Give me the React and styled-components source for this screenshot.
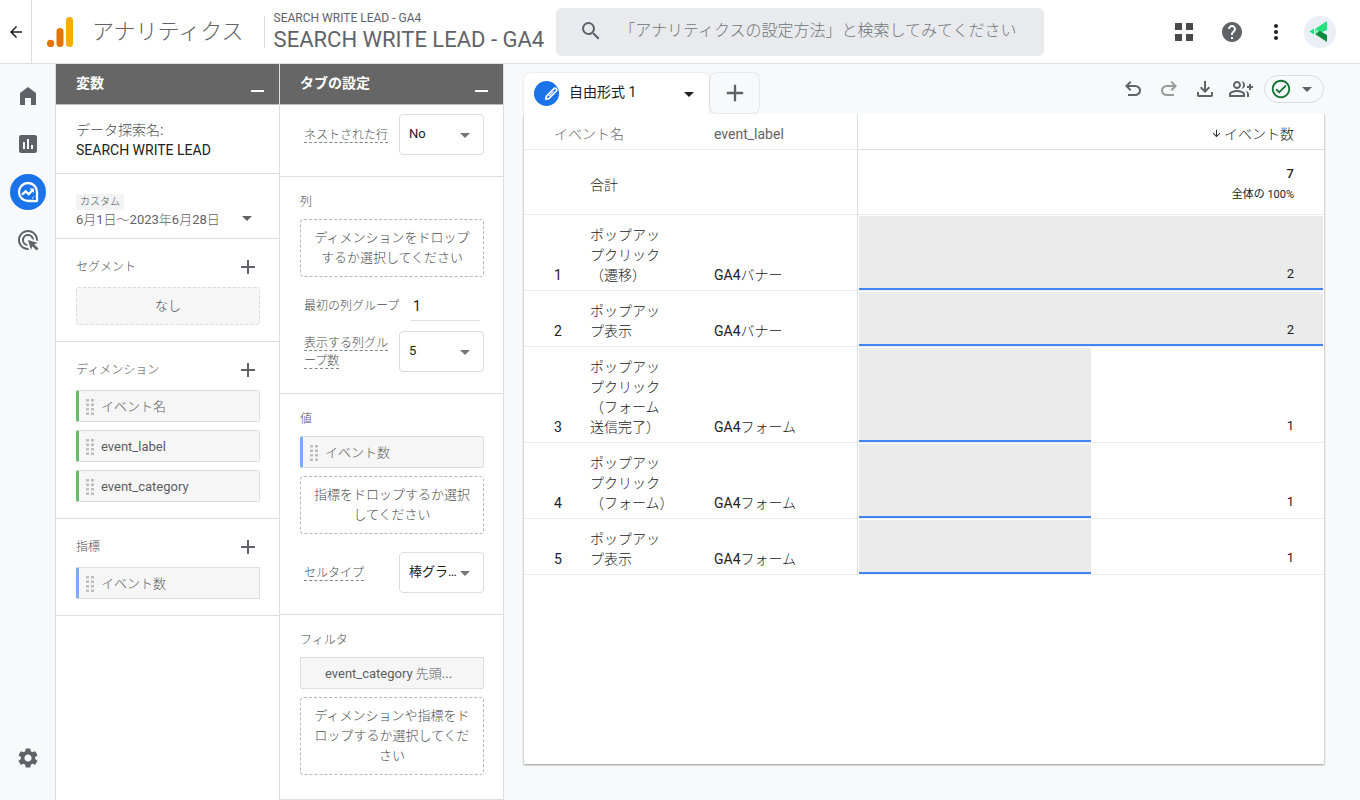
import React, { useState } from "react";
import styled, { createGlobalStyle } from "styled-components";
import {
    MdAdd,
    MdAdsClick,
    MdArrowBack,
    MdArrowDownward,
    MdArrowDropDown,
    MdAssessment,
    MdHelp,
    MdMoreVert,
    MdOutlineCheckCircle,
    MdOutlineGroupAdd,
    MdSearch,
    MdSettings,
} from "react-icons/md";

const GlobalStyle = createGlobalStyle`
    *, *::before, *::after {
        box-sizing: border-box;
    }

    body {
        margin: 0;
        background: #f8f9fb;
        color: #202124;
        font-family: Roboto, "Noto Sans CJK JP Light", "Noto Sans CJK JP", sans-serif;
        font-size: 14px;
        line-height: 20px;
    }

    button, input, select {
        font: inherit;
        color: inherit;
    }

    svg {
        display: block;
        flex: none;
    }
`;

// ===== LAYOUT =====
const Page = styled.div`
    display: flex;
    flex-direction: column;
    min-height: 100vh;
`;

const Body = styled.div`
    display: flex;
    flex: 1;
`;

const IconButton = styled.button`
    display: flex;
    align-items: center;
    justify-content: center;
    width: ${props => props.$size || 24}px;
    height: ${props => props.$size || 24}px;
    flex: none;
    padding: 0;
    border: 0;
    border-radius: 50%;
    background: ${props => props.$bg || "transparent"};
    color: ${props => props.$color || "#5f6368"};
    cursor: pointer;
`;

// ===== HEADER =====
const Header = styled.header`
    display: flex;
    align-items: center;
    height: 64px;
    padding-right: 24px;
    background: #ffffff;
    border-bottom: 1px solid #dadce0;
`;

const BackCell = styled.div`
    display: flex;
    align-items: center;
    justify-content: center;
    align-self: stretch;
    width: 32px;
    border-right: 1px solid #dadce0;
`;

const Brand = styled.a`
    display: flex;
    align-items: center;
    gap: 18px;
    margin-left: 15px;
    color: #5f6368;
    font-size: 22px;
    font-weight: 300;
    line-height: 32px;
    text-decoration: none;
    white-space: nowrap;
`;

const Property = styled.div`
    display: flex;
    align-items: center;
    margin-left: 20px;
    color: #5f6368;
    white-space: nowrap;

    &::before {
        content: "";
        width: 1px;
        height: 32px;
        margin-right: 9px;
        background: #dadce0;
    }
`;

const AccountName = styled.div`
    font-size: 12px;
    line-height: 16px;
`;

const PropertyName = styled.div`
    font-size: 22px;
    line-height: 28px;
`;

const SearchBox = styled.label`
    display: flex;
    align-items: center;
    flex: 0 1 488px;
    gap: 16px;
    height: 48px;
    margin-left: 12px;
    padding: 0 12px 2px 23px;
    border-radius: 6px;
    background: #e8eaed;
    color: #5f6368;
`;

const SearchInput = styled.input`
    flex: 1;
    min-width: 0;
    padding: 0;
    border: 0;
    outline: 0;
    background: transparent;
    font-size: 16px;
    font-weight: 300;

    &::placeholder {
        color: #70757a;
        opacity: 1;
    }
`;

const HeaderActions = styled.div`
    display: flex;
    align-items: center;
    gap: 20px;
    margin-left: auto;

    & > :first-child {
        margin-right: 4px;
    }

    & > :last-child {
        margin-left: -4px;
    }
`;

// ===== SIDE RAIL =====
const Rail = styled.nav`
    display: flex;
    flex-direction: column;
    align-items: center;
    gap: 12px;
    width: 56px;
    flex: none;
    padding: 14px 0 24px;
    border-right: 1px solid #dadce0;

    & > :last-child {
        margin-top: auto;
    }
`;

// ===== PANELS =====
const Panel = styled.section`
    width: 224px;
    flex: none;
    background: #ffffff;
    border-right: 1px solid #dadce0;
`;

const PanelHeader = styled.div`
    display: flex;
    justify-content: space-between;
    height: 41px;
    padding: 9px 15px 0 20px;
    border-bottom: 1px solid #bdbdbd;
    background: #666666;
    color: #ffffff;
`;

const PanelTitle = styled.h2`
    margin: 0;
    font-family: Roboto, "Noto Sans CJK JP", sans-serif;
    font-size: 14px;
    font-weight: 700;
    line-height: 20px;
`;

const CollapseButton = styled.button`
    width: 13px;
    height: 19px;
    padding: 0;
    border: 0;
    border-bottom: 2px solid #ffffff;
    background: transparent;
    cursor: pointer;
`;

const Section = styled.div`
    padding: ${props => props.$pad || "0 19px 16px 20px"};
    border-bottom: 1px solid #dadce0;
`;

const SectionHead = styled.div`
    display: flex;
    align-items: center;
    justify-content: space-between;
    height: ${props => (props.$compact ? 42 : 48)}px;
    padding-top: 8px;
`;

const SectionTitle = styled.h3`
    margin: 0;
    color: #4a4d51;
    font-size: 12px;
    font-weight: 400;
    line-height: 20px;
`;

const ExplorationLabel = styled.label`
    display: block;
    color: #4a4d51;
`;

const ExplorationInput = styled.input`
    display: block;
    width: 100%;
    height: 20px;
    padding: 0;
    border: 0;
    outline: 0;
    background: transparent;
`;

const DateButton = styled.button`
    display: flex;
    align-items: flex-end;
    justify-content: space-between;
    width: 100%;
    padding: 0 1px 0 0;
    border: 0;
    background: transparent;
    color: #5f6368;
    font-size: 13px;
    text-align: left;
    cursor: pointer;
`;

const DateTag = styled.span`
    display: block;
    width: fit-content;
    padding: 0 4px;
    background: #f1f3f4;
    color: #4a4d51;
    font-size: 10px;
    line-height: 16px;
`;

const EmptyBox = styled.button`
    display: block;
    width: 100%;
    height: 38px;
    border: 1px dashed #dadce0;
    border-radius: 2px;
    background: #f6f6f6;
    color: #4a4d51;
    font-size: 13px;
`;

const ChipList = styled.div`
    display: flex;
    flex-direction: column;
    gap: 8px;
`;

const ChipButton = styled.button`
    display: flex;
    align-items: center;
    gap: 7px;
    width: 100%;
    height: 32px;
    padding: 2px 31px 0 ${props => (props.$accent ? 7 : 24)}px;
    border: 1px solid #dadce0;
    border-left: ${props => (props.$accent ? `3px solid ${props.$accent}` : "1px solid #dadce0")};
    border-radius: 2px;
    background: #f6f6f6;
    color: #5a5d62;
    font-size: 13px;
    white-space: nowrap;
    cursor: grab;
`;

const DropZone = styled.button`
    display: block;
    width: 100%;
    padding: 8px 12px;
    border: 1px dashed #b4b7bb;
    border-radius: 4px;
    background: transparent;
    color: #4a4d51;
    font-size: 13px;
    line-height: 20px;
    text-align: center;
    line-break: anywhere;
`;

const Field = styled.div`
    display: flex;
    align-items: ${props => props.$align || "center"};
    gap: 11px;
    margin-top: ${props => props.$top || 0}px;
    padding-left: 4px;
`;

const FieldLabel = styled.label`
    width: ${props => (props.$wide ? 96 : 84)}px;
    flex: none;
    color: #4a4d51;
    font-size: 12px;
    line-height: ${props => (props.$wide ? 22 : 18)}px;
    line-break: anywhere;

    span {
        border-bottom: 1px dashed #80868b;
    }
`;

const NumberInput = styled.input`
    flex: 1;
    min-width: 0;
    height: 26px;
    margin-right: 4px;
    padding: 0 2px 4px;
    border: 0;
    border-bottom: 1px solid #dadce0;
    outline: 0;
    background: transparent;
`;

const SelectBox = styled.div`
    display: grid;
    flex: 1;
    min-width: 0;
    align-items: center;
    color: #757575;

    & > * {
        grid-area: 1 / 1;
    }

    svg {
        justify-self: end;
        margin-right: 7px;
        pointer-events: none;
    }
`;

const Select = styled.select`
    width: 100%;
    height: 41px;
    padding: 0 20px 2px 9px;
    border: 1px solid #dadce0;
    border-radius: 4px;
    appearance: none;
    background: #ffffff;
    color: #202124;
    font-family: Roboto, "Noto Sans CJK JP", sans-serif;
    font-size: 13px;
    text-overflow: ellipsis;
`;

// ===== REPORT =====
const Report = styled.main`
    display: flex;
    flex-direction: column;
    flex: 1;
    min-width: 0;
    padding: 9px 36px 36px 20px;
`;

const TopBar = styled.div`
    display: flex;
    align-items: flex-end;
    justify-content: space-between;
`;

const Tabs = styled.div`
    display: flex;
`;

const Tab = styled.button`
    display: flex;
    align-items: center;
    width: 185px;
    height: 41px;
    padding: 0 8px 0 10px;
    border: 0;
    border-radius: 6px 6px 0 0;
    background: #ffffff;
    box-shadow: 0 0 2px rgba(60, 64, 67, 0.2);
    clip-path: inset(-3px -3px 0 -3px);
    cursor: pointer;

    svg:last-child {
        margin-left: auto;
    }
`;

const TabBadge = styled.span`
    display: grid;
    place-items: center;
    width: 25px;
    height: 25px;
    margin-right: 10px;
    border-radius: 50%;
    background: #1a73e8;
`;

const TabName = styled.span`
    padding-bottom: 3px;
    font-family: Roboto, "Noto Sans CJK JP", sans-serif;
`;

const AddTab = styled.button`
    display: grid;
    place-items: center;
    width: 49px;
    height: 40px;
    margin-left: 1px;
    padding: 0;
    border: 0;
    border-radius: 6px;
    background: #f8f9fb;
    color: #5f6368;
    box-shadow: 0 0 2px rgba(60, 64, 67, 0.3);
    cursor: pointer;
`;

const Tools = styled.div`
    display: flex;
    align-items: center;
    gap: 12px;
    margin-bottom: 11px;
`;

const StatusButton = styled.button`
    display: flex;
    align-items: center;
    gap: 3px;
    height: 28px;
    margin-left: -1px;
    padding: 0 4px 0 5px;
    border: 1px solid #dadce0;
    border-radius: 14px;
    background: transparent;
    color: #5f6368;
    cursor: pointer;
`;

const Card = styled.div`
    flex: 1;
    background: #ffffff;
    box-shadow: 0 1px 2px rgba(60, 64, 67, 0.5), 0 0 1px rgba(60, 64, 67, 0.25);
    clip-path: inset(0 -3px -3px -3px);
`;

const Table = styled.table`
    width: 100%;
    border-collapse: separate;
    border-spacing: 0;
    table-layout: fixed;

    th, td {
        padding: 10px 0 5px;
        border-bottom: 1px solid #e8eaed;
        font-weight: 400;
        text-align: left;
        vertical-align: bottom;
        white-space: nowrap;
    }

    thead th {
        height: 36px;
        padding: 4px 0 0;
        color: #5f6368;
        vertical-align: middle;
    }

    tr > :first-child {
        padding-left: 30px;
    }
`;

const Col = styled.col`
    width: ${props => props.$width};
`;

const LabelCell = styled.td`
    && {
        border-right: 1px solid #dadce0;
    }
`;

const ValueHead = styled.th`
    && {
        padding-right: 30px;
        border-bottom-color: #dadce0;
        color: #202124;
        text-align: right;
    }

    svg {
        display: inline-block;
        margin-right: 2px;
    }
`;

const TotalName = styled.th`
    && {
        height: 65px;
        padding: 6px 0 0;
        vertical-align: middle;
    }
`;

const TotalValue = styled.td`
    && {
        padding: 14px 30px 8px 0;
        font-size: 13px;
        font-weight: 500;
        text-align: right;
    }

    small {
        display: block;
        font-family: Roboto, "Noto Sans CJK JP", sans-serif;
        font-size: 11px;
        font-weight: 400;
        line-height: 22px;
    }
`;

// The cell's bar is painted as two backgrounds: the blue base line over the grey area.
const BarCell = styled.td`
    && {
        padding: 10px 30px 6px 0;
        font-size: 13px;
        text-align: right;
        background-image: linear-gradient(#4285f4, #4285f4), linear-gradient(#ebebeb, #ebebeb);
        background-position: 1px 100%, 1px 1px;
        background-repeat: no-repeat;
        background-clip: padding-box;
        background-size:
            calc((100% - 2px) * var(--share)) 2px,
            calc((100% - 2px) * var(--share)) calc(100% - 1px);
    }
`;

// ===== ICONS =====
function AnalyticsLogo() {
    return (
        <svg width="27" height="32" viewBox="0 0 27 32" aria-hidden="true">
            <rect x="19" y="1" width="7" height="30" rx="3.5" fill="#f9ab00" />
            <rect x="9.5" y="12" width="7" height="19" rx="3.5" fill="#e37400" />
            <circle cx="3.6" cy="27.4" r="3.6" fill="#e37400" />
        </svg>
    );
}

function AppsIcon() {
    return (
        <svg width="24" height="24" viewBox="0 0 24 24" fill="#4a4a4a">
            <path d="M3 3h7v7H3zM14 3h7v7h-7zM3 14h7v7H3zM14 14h7v7h-7z" />
        </svg>
    );
}

function AvatarIcon() {
    return (
        <svg width="32" height="32" viewBox="0 0 32 32">
            <path d="M23 5v9l-7 3-5-4z" fill="#26e07f" />
            <path d="M12 16l4-1 7 4v7l-12-8z" fill="#0b8a3d" />
            <path d="M5.500 15.500L10 12.500v6z" fill="#26e07f" />
            <path d="M11 12.500l4 3-4 3z" fill="#7df0b4" />
        </svg>
    );
}

function HomeIcon() {
    return (
        <svg width="24" height="24" viewBox="0 0 24 24" fill="currentColor">
            <path d="M4 21V9l8-6 8 6v12h-5v-7H9v7z" />
        </svg>
    );
}

function ExploreIcon() {
    return (
        <svg width="24" height="24" viewBox="0 0 24 24" fill="none" stroke="#ffffff">
            <path d="M21 12v9h-9a9 9 0 1 1 9-9z" strokeWidth="2.300" strokeLinejoin="round" />
            <path d="M6 14.700l3.700-3.400 3 2.800 4.300-4.300" strokeWidth="2.300" />
            <path d="M13.500 8.500h4.500v4.500z" fill="#ffffff" stroke="none" />
            <path d="M18 16.500a8 8 0 0 1-2 2" strokeWidth="1" />
            <circle cx="19" cy="19" r="1" fill="#1a73e8" stroke="none" />
        </svg>
    );
}

function UndoIcon({ flipped }) {
    return (
        <svg width="24" height="24" viewBox="0 0 24 24" fill="currentColor">
            <path
                transform={flipped ? "matrix(-1 0 0 1 24 0)" : undefined}
                d="M7 19v-2h7.100q1.575 0 2.737-1Q18 15 18 13.500T16.837 11Q15.675 10 14.100 10H7.800l2.600 2.600L9 14 4 9l5-5 1.400 1.400L7.800 8h6.300q2.425 0 4.163 1.575Q20 11.150 20 13.500t-1.737 3.925T14.100 19z"
            />
        </svg>
    );
}

function DownloadIcon() {
    return (
        <svg width="24" height="24" viewBox="0 0 24 24" fill="currentColor">
            <path d="M12 16l-5-5 1.400-1.450 2.600 2.600V4h2v8.150l2.600-2.600L17 11zM6 20q-.825 0-1.412-.587Q4 18.825 4 18v-3h2v3h12v-3h2v3q0 .825-.587 1.413Q18.825 20 18 20z" />
        </svg>
    );
}

function PencilIcon() {
    return (
        <svg width="15" height="15" viewBox="0 0 15 15" fill="none" stroke="#ffffff">
            <path d="M1.800 13.200l.5-2.900 7.700-7.700a1.400 1.400 0 0 1 2 0l.4.4a1.400 1.400 0 0 1 0 2l-7.700 7.700z" strokeWidth="1.700" strokeLinejoin="round" />
            <path d="M5 10l4.500-4.500" strokeWidth="1" />
        </svg>
    );
}

function DragHandle() {
    return (
        <svg width="8" height="17" viewBox="0 0 8 17" fill="#bdbdbd">
            {[0, 4.5, 9, 13.5].map(y => (
                <React.Fragment key={y}>
                    <rect x="0" y={y} width="3" height="2.500" />
                    <rect x="5" y={y} width="3" height="2.500" />
                </React.Fragment>
            ))}
        </svg>
    );
}

// ===== PARTS =====
const GREEN = "#66bb6a";
const BLUE = "#7baaf7";

function Chip({ accent, children }) {
    return (
        <ChipButton type="button" $accent={accent}>
            {accent && <DragHandle />}
            {children}
        </ChipButton>
    );
}

function PanelTop({ title }) {
    return (
        <PanelHeader>
            <PanelTitle>{title}</PanelTitle>
            <CollapseButton type="button" aria-label={`${title}を最小化`} />
        </PanelHeader>
    );
}

function AddableHead({ title }) {
    return (
        <SectionHead>
            <SectionTitle>{title}</SectionTitle>
            <IconButton type="button" aria-label={`${title}を追加`}>
                <MdAdd size={24} />
            </IconButton>
        </SectionHead>
    );
}

function SelectField({ id, label, options, top }) {
    return (
        <Field $top={top}>
            <FieldLabel htmlFor={id}>
                <span>{label}</span>
            </FieldLabel>
            <SelectBox>
                <Select id={id}>
                    {options.map(option => (
                        <option key={option}>{option}</option>
                    ))}
                </Select>
                <MdArrowDropDown size={24} />
            </SelectBox>
        </Field>
    );
}

const rows = [
    { name: ["ポップアッ", "プクリック", "（遷移）"], label: "GA4バナー", count: 2 },
    { name: ["ポップアッ", "プ表示"], label: "GA4バナー", count: 2 },
    { name: ["ポップアッ", "プクリック", "（フォーム", "送信完了）"], label: "GA4フォーム", count: 1 },
    { name: ["ポップアッ", "プクリック", "（フォーム）"], label: "GA4フォーム", count: 1 },
    { name: ["ポップアッ", "プ表示"], label: "GA4フォーム", count: 1 },
];

const maxCount = Math.max(...rows.map(row => row.count));

function ReportTable() {
    return (
        <Table>
            <colgroup>
                <Col $width="66px" />
                <Col $width="124px" />
                <Col $width="144px" />
                <Col $width="auto" />
            </colgroup>
            <thead>
                <tr>
                    <th colSpan={2} scope="col">イベント名</th>
                    <LabelCell as="th" scope="col">event_label</LabelCell>
                    <ValueHead scope="col">
                        <MdArrowDownward size={11} />
                        イベント数
                    </ValueHead>
                </tr>
            </thead>
            <tbody>
                <tr>
                    <td />
                    <TotalName scope="row">合計</TotalName>
                    <LabelCell />
                    <TotalValue>
                        7<small>全体の 100%</small>
                    </TotalValue>
                </tr>
                {rows.map((row, i) => (
                    <tr key={i}>
                        <td>{i + 1}</td>
                        <td>
                            {row.name.map(line => (
                                <div key={line}>{line}</div>
                            ))}
                        </td>
                        <LabelCell>{row.label}</LabelCell>
                        <BarCell style={{ "--share": row.count / maxCount }}>{row.count}</BarCell>
                    </tr>
                ))}
            </tbody>
        </Table>
    );
}

// ===== MAIN COMPONENT =====
export default function App() {
    const [name, setName] = useState("SEARCH WRITE LEAD");
    const [firstGroup, setFirstGroup] = useState("1");

    return (
        <Page>
            <GlobalStyle />
            <Header>
                <BackCell>
                    <IconButton type="button" aria-label="戻る" $color="#202124">
                        <MdArrowBack size={18} />
                    </IconButton>
                </BackCell>
                <Brand href="#home">
                    <AnalyticsLogo />
                    アナリティクス
                </Brand>
                <Property>
                    <div>
                        <AccountName>SEARCH WRITE LEAD - GA4</AccountName>
                        <PropertyName>SEARCH WRITE LEAD - GA4</PropertyName>
                    </div>
                </Property>
                <SearchBox>
                    <MdSearch size={24} />
                    <SearchInput
                        type="text"
                        aria-label="検索"
                        placeholder="「アナリティクスの設定方法」と検索してみてください"
                    />
                </SearchBox>
                <HeaderActions>
                    <IconButton type="button" aria-label="アプリ"><AppsIcon /></IconButton>
                    <IconButton type="button" aria-label="ヘルプ"><MdHelp size={24} /></IconButton>
                    <IconButton type="button" aria-label="その他" $color="#202124"><MdMoreVert size={24} /></IconButton>
                    <IconButton type="button" aria-label="アカウント" $size={32} $bg="#e9eff4"><AvatarIcon /></IconButton>
                </HeaderActions>
            </Header>

            <Body>
                <Rail>
                    <IconButton type="button" aria-label="ホーム" $size={36}><HomeIcon /></IconButton>
                    <IconButton type="button" aria-label="レポート" $size={36}><MdAssessment size={24} /></IconButton>
                    <IconButton type="button" aria-label="探索" $size={36} $bg="#1a73e8"><ExploreIcon /></IconButton>
                    <IconButton type="button" aria-label="広告" $size={36}><MdAdsClick size={24} /></IconButton>
                    <IconButton type="button" aria-label="管理" $size={36}><MdSettings size={24} /></IconButton>
                </Rail>

                <Panel>
                    <PanelTop title="変数" />
                    <Section $pad="15px 19px 13px 20px">
                        <ExplorationLabel htmlFor="exploration">データ探索名:</ExplorationLabel>
                        <ExplorationInput id="exploration" value={name} onChange={e => setName(e.target.value)} />
                    </Section>
                    <Section $pad="20px 19px 8px 20px">
                        <DateButton type="button">
                            <span>
                                <DateTag>カスタム</DateTag>
                                6月1日～2023年6月28日
                            </span>
                            <MdArrowDropDown size={24} />
                        </DateButton>
                    </Section>
                    <Section>
                        <AddableHead title="セグメント" />
                        <EmptyBox type="button">なし</EmptyBox>
                    </Section>
                    <Section>
                        <AddableHead title="ディメンション" />
                        <ChipList>
                            <Chip accent={GREEN}>イベント名</Chip>
                            <Chip accent={GREEN}>event_label</Chip>
                            <Chip accent={GREEN}>event_category</Chip>
                        </ChipList>
                    </Section>
                    <Section>
                        <AddableHead title="指標" />
                        <Chip accent={BLUE}>イベント数</Chip>
                    </Section>
                </Panel>

                <Panel>
                    <PanelTop title="タブの設定" />
                    <Section $pad="9px 19px 21px 20px">
                        <SelectField id="nested" label="ネストされた行" options={["No", "Yes"]} />
                    </Section>
                    <Section $pad="0 19px 21px 20px">
                        <SectionHead $compact>
                            <SectionTitle>列</SectionTitle>
                        </SectionHead>
                        <DropZone type="button">ディメンションをドロップするか選択してください</DropZone>
                        <Field $top={18} $align="flex-start">
                            <FieldLabel htmlFor="first-group" $wide>最初の列グループ</FieldLabel>
                            <NumberInput
                                id="first-group"
                                inputMode="numeric"
                                value={firstGroup}
                                onChange={e => setFirstGroup(e.target.value)}
                            />
                        </Field>
                        <SelectField id="group-count" label="表示する列グループ数" options={["5", "10", "15"]} top={10} />
                    </Section>
                    <Section $pad="0 19px 21px 20px">
                        <SectionHead $compact>
                            <SectionTitle>値</SectionTitle>
                        </SectionHead>
                        <ChipList>
                            <Chip accent={BLUE}>イベント数</Chip>
                            <DropZone type="button">指標をドロップするか選択してください</DropZone>
                        </ChipList>
                        <SelectField id="cell-type" label="セルタイプ" options={["棒グラフ表示", "書式なしテキスト", "ヒートマップ"]} top={18} />
                    </Section>
                    <Section $pad="0 19px 24px 20px">
                        <SectionHead $compact>
                            <SectionTitle>フィルタ</SectionTitle>
                        </SectionHead>
                        <ChipList>
                            <Chip>event_category 先頭...</Chip>
                            <DropZone type="button">ディメンションや指標をドロップするか選択してください</DropZone>
                        </ChipList>
                    </Section>
                </Panel>

                <Report>
                    <TopBar>
                        <Tabs>
                            <Tab type="button">
                                <TabBadge><PencilIcon /></TabBadge>
                                <TabName>自由形式 1</TabName>
                                <MdArrowDropDown size={24} />
                            </Tab>
                            <AddTab type="button" aria-label="タブを追加">
                                <MdAdd size={28} />
                            </AddTab>
                        </Tabs>
                        <Tools>
                            <IconButton type="button" aria-label="元に戻す"><UndoIcon /></IconButton>
                            <IconButton type="button" aria-label="やり直す" $color="#9a9a9a"><UndoIcon flipped /></IconButton>
                            <IconButton type="button" aria-label="ダウンロード"><DownloadIcon /></IconButton>
                            <IconButton type="button" aria-label="共有"><MdOutlineGroupAdd size={24} /></IconButton>
                            <StatusButton type="button" aria-label="データの状態">
                                <MdOutlineCheckCircle size={22} color="#137333" />
                                <MdArrowDropDown size={24} />
                            </StatusButton>
                        </Tools>
                    </TopBar>
                    <Card>
                        <ReportTable />
                    </Card>
                </Report>
            </Body>
        </Page>
    );
}
